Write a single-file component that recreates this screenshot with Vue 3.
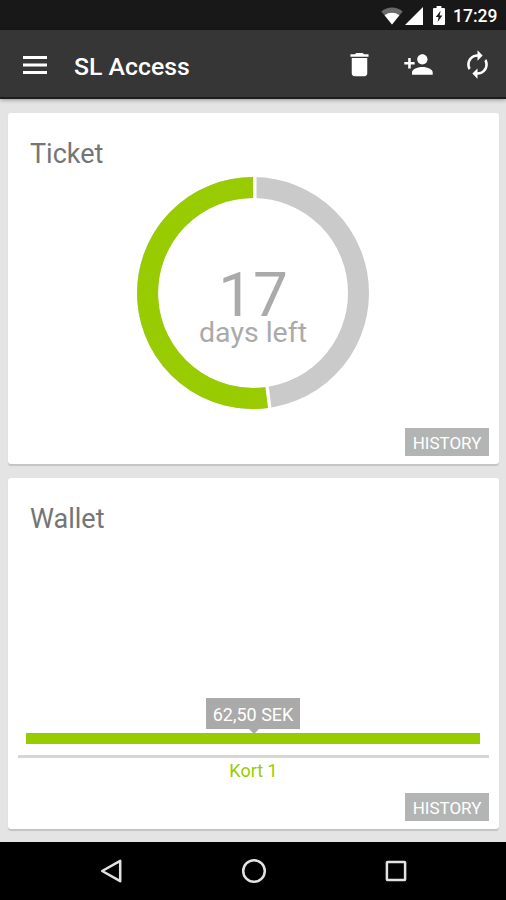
<template>
  <div class="screen">
    <!-- Status bar -->
    <div class="status-bar">
      <svg class="wifi" viewBox="0 0 22 18">
        <path d="M11 17.5 L0.3 4.4 C6.5 -0.7 15.5 -0.7 21.7 4.4 Z" fill="#6a6a6a" />
        <path d="M11 17.5 L3.6 8.3 C8 5 14 5 18.4 8.3 Z" fill="#fff" />
      </svg>
      <svg class="signal" viewBox="0 0 18 18">
        <path d="M18 0 V18 H0 Z" fill="#fff" />
      </svg>
      <svg class="battery" viewBox="0 0 12 19">
        <path d="M3.6 0 h4.8 v2 H11 q1 0 1 1 V18 q0 1 -1 1 H1 q-1 0 -1 -1 V3 q0 -1 1 -1 H3.6 Z" fill="#fff" />
        <path d="M7.6 4.8 L2.8 11 H5.6 L4.6 16 L9.4 9.6 H6.6 Z" fill="#181818" />
      </svg>
      <span class="clock">17:29</span>
    </div>

    <!-- Toolbar -->
    <header class="toolbar">
      <svg class="menu" viewBox="0 0 24 20">
        <path d="M0 1 H24 V4 H0 Z M0 8.5 H24 V11.5 H0 Z M0 16 H24 V19 H0 Z" fill="#fff" />
      </svg>
      <h1 class="title">SL Access</h1>
      <div class="actions">
        <svg v-for="action in actions" :key="action.name" class="action" viewBox="0 0 24 24">
          <path :d="action.path" fill="#fff" />
        </svg>
      </div>
    </header>

    <main class="content">
      <section class="card">
        <h2 class="card-title">Ticket</h2>
        <div class="ring">
          <svg class="ring-chart" viewBox="-116 -116 232 232">
            <circle r="105.5" fill="none" stroke="#cacaca" stroke-width="21" />
            <path :d="usedArc" fill="none" stroke="#99cc00" stroke-width="21" />
            <!-- gaps between the segments -->
            <path d="M1.8 -117 V-93 M14 93 L17 117" stroke="#fff" stroke-width="3.4" />
          </svg>
          <div class="ring-label">
            <span class="days">{{ daysLeft }}</span>
            <span class="caption">days left</span>
          </div>
        </div>
        <button class="history">HISTORY</button>
      </section>

      <section class="card">
        <h2 class="card-title">Wallet</h2>
        <div class="wallet">
          <div class="balance">62,50 SEK</div>
          <div class="bar"></div>
          <div class="axis"></div>
          <div class="card-name">Kort 1</div>
        </div>
        <button class="history">HISTORY</button>
      </section>
    </main>

    <!-- Navigation bar -->
    <nav class="nav-bar">
      <svg class="nav-icon" viewBox="0 0 26 26">
        <path d="M21.2 2.8 V23.2 L3.2 13 Z" />
      </svg>
      <svg class="nav-icon" viewBox="0 0 26 26">
        <circle cx="13" cy="13" r="10.8" />
      </svg>
      <svg class="nav-icon" viewBox="0 0 26 26">
        <rect x="3.9" y="3.9" width="18.2" height="18.2" rx="0.5" />
      </svg>
    </nav>
  </div>
</template>

<script setup>
import { ref, computed } from 'vue';

const daysLeft = ref(17);
const startAngle = 171.6; // clockwise from the top

const actions = [
  {
    name: 'delete',
    path: 'M6 19c0 1.1.9 2 2 2h8c1.1 0 2-.9 2-2V7H6v12zM19 4h-3.5l-1-1h-5l-1 1H5v2h14V4z'
  },
  {
    name: 'add-person',
    path: 'M15 12c2.21 0 4-1.79 4-4s-1.79-4-4-4-4 1.79-4 4 1.79 4 4 4zm-9-2V7H4v3H1v2h3v3h2v-3h3v-2H6zm9 4c-2.67 0-8 1.34-8 4v2h16v-2c0-2.66-5.33-4-8-4z'
  },
  {
    name: 'refresh',
    path: 'M12 6v3l4-4-4-4v3c-4.42 0-8 3.58-8 8 0 1.57.46 3.03 1.24 4.26L6.7 14.8c-.45-.83-.7-1.79-.7-2.8 0-3.31 2.69-6 6-6zm6.76 1.74L17.3 9.2c.44.84.7 1.79.7 2.8 0 3.31-2.69 6-6 6v-3l-4 4 4 4v-3c4.42 0 8-3.58 8-8 0-1.57-.46-3.03-1.24-4.26z'
  }
];

const usedArc = computed(() => {
  const r = 105.5;
  const a = (startAngle * Math.PI) / 180;
  return `M${r * Math.sin(a)} ${-r * Math.cos(a)} A${r} ${r} 0 1 1 1.8 ${-r}`;
});
</script>

<style>
body {
  background: #e4e4e4;
}
</style>

<style scoped>
.screen {
  display: flex;
  flex-direction: column;
  width: 506px;
  height: 900px;
  overflow: hidden;
  background: #e4e4e4;
  font-family: Roboto, "Noto Sans", sans-serif;
}

.screen svg {
  display: block;
  flex: none;
}

.status-bar {
  display: flex;
  justify-content: flex-end;
  align-items: center;
  height: 30px;
  padding: 1px 9px 0 0;
  box-sizing: border-box;
  background: #181818;
  color: #fff;
}

.wifi {
  width: 22px;
  height: 18px;
}

.signal {
  width: 18px;
  height: 18px;
  margin-left: 2px;
}

.battery {
  width: 12px;
  height: 19px;
  margin-left: 10px;
}

.clock {
  width: 44px;
  margin-left: 8px;
  font-size: 17.5px;
  font-weight: 500;
  line-height: 28px;
  white-space: nowrap;
}

/* Toolbar */
.toolbar {
  display: flex;
  align-items: center;
  height: 69px;
  padding: 0 13.5px 0 23px;
  box-sizing: border-box;
  background: #363636;
  border-bottom: 2px solid #1c1c1c;
  box-shadow: 0 1px 4px rgba(0, 0, 0, 0.35);
  z-index: 1;
}

.menu {
  width: 24px;
  height: 20px;
  margin-top: 3px;
}

.title {
  margin: 6px 0 0 27px;
  color: #fff;
  font-size: 24.8px;
  font-weight: 500;
  line-height: 30px;
}

.actions {
  display: flex;
  gap: 28px;
  margin: 1px 0 0 auto;
}

.action {
  width: 31px;
  height: 31px;
}

/* Cards */
.content {
  display: flex;
  flex: 1;
  flex-direction: column;
  gap: 14px;
  padding: 14px 7px 0 8px;
}

.card {
  display: flex;
  flex-direction: column;
  height: 351px;
  padding: 25px 10px 8px;
  box-sizing: border-box;
  background: #fff;
  border-radius: 3px;
  box-shadow: 0 2px 1px rgba(0, 0, 0, 0.14);
}

.card-title {
  margin: 0 0 0 12px;
  color: #757575;
  font-size: 27px;
  font-weight: 400;
  line-height: 32px;
}

.ring {
  display: grid;
  align-self: center;
  width: 232px;
  height: 232px;
  margin: 6.5px 1px 0 0;
}

.ring-chart,
.ring-label {
  grid-area: 1 / 1;
}

.ring-chart {
  width: 232px;
  height: 232px;
}

.ring-label {
  display: flex;
  flex-direction: column;
  align-items: center;
  padding-top: 96px;
  color: #aaa;
}

.days {
  font-size: 62px;
  line-height: 44px;
}

.caption {
  font-size: 28.5px;
  line-height: 32px;
}

.history {
  align-self: flex-end;
  width: 84px;
  height: 28px;
  margin-top: auto;
  padding: 2px 0 0;
  border: 0;
  background: #b3b5b5;
  color: #fff;
  font-family: inherit;
  font-size: 17px;
  line-height: 26px;
}

.wallet {
  display: flex;
  flex-direction: column;
  align-items: center;
  margin: 163px 0 0;
}

.balance {
  position: relative;
  width: 94px;
  height: 31px;
  margin-right: 1px;
  background: #aaa;
  color: #fff;
  font-size: 18px;
  line-height: 33px;
  text-align: center;
}

/* Tooltip pointer */
.balance::after {
  content: "";
  position: absolute;
  top: 100%;
  left: 43px;
  border: 5px solid transparent;
  border-top-color: #aaa;
  border-bottom: 0;
}

.bar {
  width: 454px;
  height: 11px;
  margin: 4px 1px 0 0;
  background: #99cc00;
}

.axis {
  width: 100%;
  height: 3px;
  margin-top: 11px;
  background: #d6d6d6;
}

.card-name {
  margin-top: 2px;
  color: #99cc00;
  font-size: 18px;
  line-height: 22px;
}

/* Navigation bar */
.nav-bar {
  display: flex;
  justify-content: center;
  align-items: center;
  gap: 116px;
  height: 58px;
  padding-left: 1px;
  background: #000;
}

.nav-icon {
  width: 26px;
  height: 26px;
  fill: none;
  stroke: #e2e2e2;
  stroke-width: 2.5;
  stroke-linejoin: round;
}
</style>
